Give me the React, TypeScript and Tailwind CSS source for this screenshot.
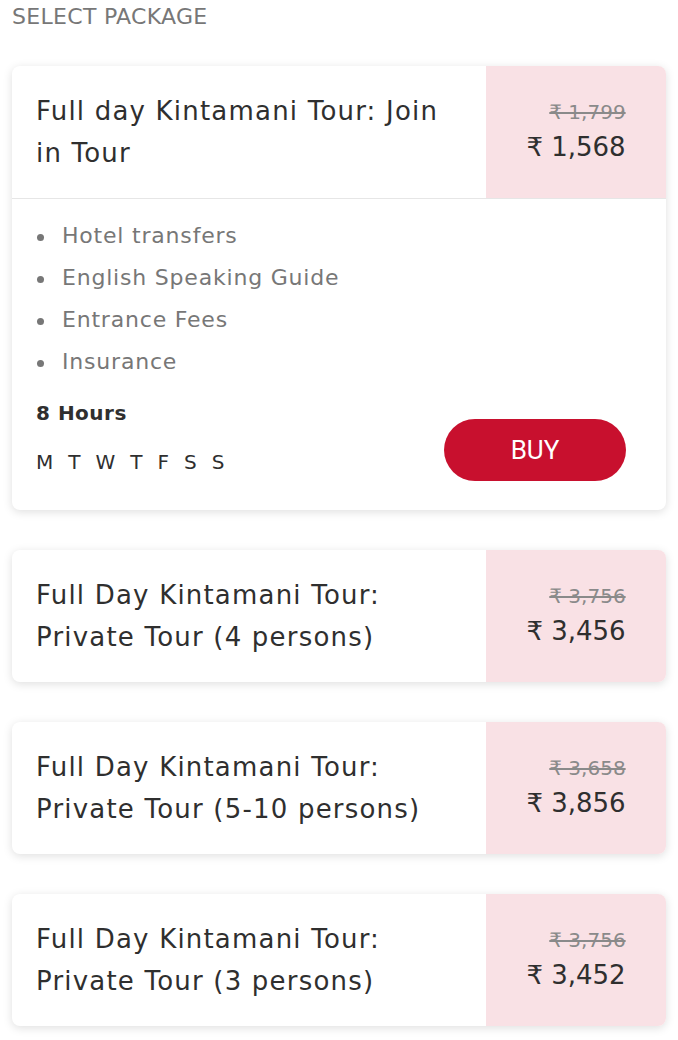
import React from 'react';

interface Pkg {
  title: string[];
  oldPrice: string;
  price: string;
}

const packages: Pkg[] = [
  { title: ['Full Day Kintamani Tour:', 'Private Tour (4 persons)'], oldPrice: '₹ 3,756', price: '₹ 3,456' },
  { title: ['Full Day Kintamani Tour:', 'Private Tour (5-10 persons)'], oldPrice: '₹ 3,658', price: '₹ 3,856' },
  { title: ['Full Day Kintamani Tour:', 'Private Tour (3 persons)'], oldPrice: '₹ 3,756', price: '₹ 3,452' },
];

const features = ['Hotel transfers', 'English Speaking Guide', 'Entrance Fees', 'Insurance'];
const days = ['M', 'T', 'W', 'T', 'F', 'S', 'S'];

const PriceBox: React.FC<{ oldPrice: string; price: string }> = ({ oldPrice, price }) => (
  <div className="w-[180px] shrink-0 bg-[#f9e1e5] flex items-center justify-center">
    <div className="text-right">
      <div className="text-[20px] leading-[30px] text-[#8a8a8a] line-through">{oldPrice}</div>
      <div className="text-[26px] leading-[40px] text-[#2f2f2f]">{price}</div>
    </div>
  </div>
);

const CardHeader: React.FC<{ title: string[]; oldPrice: string; price: string }> = ({ title, oldPrice, price }) => (
  <div className="flex h-[132px]">
    <div className="flex-1 flex flex-col justify-center pl-6 text-[26px] leading-[42px] tracking-[1.2px] text-[#2f2f2f]">
      {title.map((t, i) => (
        <div key={i}>{t}</div>
      ))}
    </div>
    <PriceBox oldPrice={oldPrice} price={price} />
  </div>
);

export default function App() {
  return (
    <div className="bg-white min-h-[1040px] px-3 pt-[3px] font-['DejaVu_Sans',sans-serif]">
      <div className="text-[22px] leading-[28px] tracking-[0.3px] text-[#777]">SELECT PACKAGE</div>

      <div className="mt-[35px] rounded-lg bg-white shadow-[0_2px_10px_rgba(0,0,0,0.13)] overflow-hidden">
        <div className="border-b border-[#e6e6e6]">
          <CardHeader title={['Full day Kintamani Tour: Join', 'in Tour']} oldPrice="₹ 1,799" price="₹ 1,568" />
        </div>
        <div className="pl-6 pr-10 pt-4 pb-[29px]">
          <ul className="text-[22px] leading-[42px] tracking-[0.8px] text-[#777]">
            {features.map((f) => (
              <li key={f} className="flex items-center">
                <span className="w-[7px] h-[7px] shrink-0 rounded-full bg-[#777] ml-[1px] mr-[18px] translate-y-[1px]" />
                <span>{f}</span>
              </li>
            ))}
          </ul>
          <div className="flex items-end justify-between mt-[15px]">
            <div className="pb-1">
              <div className="text-[20px] leading-[30px] font-bold tracking-[0.5px] text-[#2f2f2f]">8 Hours</div>
              <div className="mt-[19px] flex gap-[15px] text-[20px] leading-[30px] text-[#2f2f2f]">
                {days.map((d, i) => (
                  <span key={i}>{d}</span>
                ))}
              </div>
            </div>
            <button className="w-[182px] h-[62px] rounded-full bg-[#c8102e] text-white text-[26px] font-['Roboto',sans-serif]">
              BUY
            </button>
          </div>
        </div>
      </div>

      {packages.map((p, i) => (
        <div key={i} className="mt-10 rounded-lg bg-white shadow-[0_2px_10px_rgba(0,0,0,0.13)] overflow-hidden">
          <CardHeader title={p.title} oldPrice={p.oldPrice} price={p.price} />
        </div>
      ))}
    </div>
  );
}
